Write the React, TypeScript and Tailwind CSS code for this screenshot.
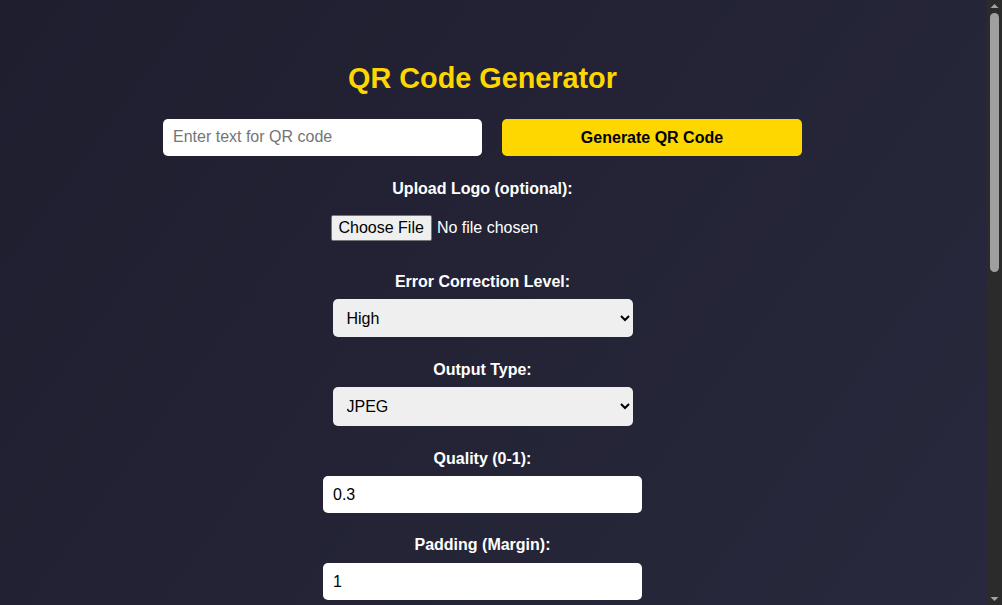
import React from "react";

const labelCls = "block text-[16px] leading-[18px] font-bold text-white";
const inputCls =
  "block w-[319px] h-[37px] px-[10px] rounded-[5px] bg-white text-black text-[16px] outline-none";
const selectCls =
  "block w-[300px] px-[10px] rounded-[5px] bg-[#efefef] text-black text-[16px] outline-none";

// Dark classic scrollbar shown at the right edge of the page
const Scrollbar = () => (
  <div className="w-[15px] h-full shrink-0 bg-[#2b2b2b] flex flex-col items-center">
    <svg width="15" height="13" viewBox="0 0 15 13" className="shrink-0">
      <path d="M3.5 8 L7.5 4 L11.5 8 Z" fill="#a3a3a3" />
    </svg>
    <div className="w-[9px] h-[259px] rounded-full bg-[#9f9f9f]" />
    <div className="flex-1" />
    <svg width="15" height="13" viewBox="0 0 15 13" className="shrink-0">
      <path d="M3.5 5 L7.5 9 L11.5 5 Z" fill="#a3a3a3" />
    </svg>
  </div>
);

const App = () => {
  return (
    <div className="h-screen w-full flex flex-row overflow-hidden font-['Liberation_Sans',Arial,sans-serif]">
      <div className="flex-1 h-full overflow-hidden">
        <div className="min-h-[1340px] w-full bg-gradient-to-br from-[#1f1e2f] to-[#2c2d42]">
          <div className="flex flex-col items-center pr-[22px]">
            {/* Title */}
            <h1 className="pt-[62px] text-[28.8px] leading-[32px] font-bold text-[#ffd700]">
              QR Code Generator
            </h1>

            {/* Text + generate button */}
            <div className="mt-[25px] flex flex-row gap-[20px]">
              <input
                type="text"
                placeholder="Enter text for QR code"
                className={inputCls + " pb-[2px] placeholder:text-[#757575]"}
              />
              <button className="w-[300px] h-[37px] rounded-[5px] bg-[#ffd700] text-black text-[16px] font-bold">
                Generate QR Code
              </button>
            </div>

            {/* Logo upload */}
            <label className={labelCls + " mt-[24px]"}>Upload Logo (optional):</label>
            <input
              type="file"
              className="mt-[17px] w-[304px] text-[16px] leading-[18px] text-white file:mr-[5px] file:px-[7px] file:py-[3px] file:border file:border-[#767676] file:rounded-[2px] file:bg-[#efefef] file:text-black"
            />

            {/* Error correction */}
            <label className={labelCls + " mt-[32px]"}>Error Correction Level:</label>
            <select className={selectCls + " mt-[8px] h-[38px]"} defaultValue="H">
              <option value="L">Low</option>
              <option value="M">Medium</option>
              <option value="Q">Quartile</option>
              <option value="H">High</option>
            </select>

            {/* Output type */}
            <label className={labelCls + " mt-[24px]"}>Output Type:</label>
            <select className={selectCls + " mt-[8px] h-[39px]"} defaultValue="image/jpeg">
              <option value="image/png">PNG</option>
              <option value="image/jpeg">JPEG</option>
              <option value="image/webp">WEBP</option>
            </select>

            {/* Quality */}
            <label className={labelCls + " mt-[24px]"}>Quality (0-1):</label>
            <input type="text" defaultValue="0.3" className={inputCls + " mt-[8px]"} />

            {/* Margin */}
            <label className={labelCls + " mt-[23px]"}>Padding (Margin):</label>
            <input type="text" defaultValue="1" className={inputCls + " mt-[9px]"} />

            {/* Below the fold */}
            <label className={labelCls + " mt-[24px]"}>Scale:</label>
            <input type="text" defaultValue="4" className={inputCls + " mt-[8px]"} />

            <label className={labelCls + " mt-[24px]"}>Width (px):</label>
            <input type="text" defaultValue="300" className={inputCls + " mt-[8px]"} />

            <label className={labelCls + " mt-[24px]"}>Dark Color:</label>
            <input type="text" defaultValue="#000000" className={inputCls + " mt-[8px]"} />

            <label className={labelCls + " mt-[24px]"}>Light Color:</label>
            <input type="text" defaultValue="#ffffff" className={inputCls + " mt-[8px]"} />

            <div className="mt-[30px] w-[300px] h-[300px]" />
          </div>
        </div>
      </div>
      <Scrollbar />
    </div>
  );
};

export default App;
